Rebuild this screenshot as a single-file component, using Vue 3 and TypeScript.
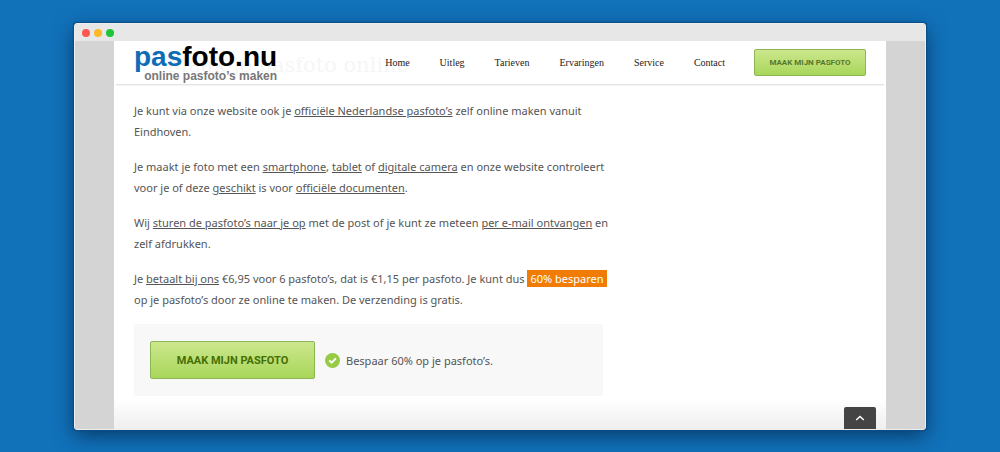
<script setup lang="ts">
interface Part {
  text: string
  kind?: 'link' | 'mark'
}

const nav: string[] = ['Home', 'Uitleg', 'Tarieven', 'Ervaringen', 'Service', 'Contact']

const paragraphs: Part[][][] = [
  [
    [
      { text: 'Je kunt via onze website ook je ' },
      { text: 'officiële Nederlandse pasfoto’s', kind: 'link' },
      { text: ' zelf online maken vanuit' },
    ],
    [{ text: 'Eindhoven.' }],
  ],
  [
    [
      { text: 'Je maakt je foto met een ' },
      { text: 'smartphone', kind: 'link' },
      { text: ', ' },
      { text: 'tablet', kind: 'link' },
      { text: ' of ' },
      { text: 'digitale camera', kind: 'link' },
      { text: ' en onze website controleert' },
    ],
    [
      { text: 'voor je of deze ' },
      { text: 'geschikt', kind: 'link' },
      { text: ' is voor ' },
      { text: 'officiële documenten', kind: 'link' },
      { text: '.' },
    ],
  ],
  [
    [
      { text: 'Wij ' },
      { text: 'sturen de pasfoto’s naar je op', kind: 'link' },
      { text: ' met de post of je kunt ze meteen ' },
      { text: 'per e-mail ontvangen', kind: 'link' },
      { text: ' en' },
    ],
    [{ text: 'zelf afdrukken.' }],
  ],
  [
    [
      { text: 'Je ' },
      { text: 'betaalt bij ons', kind: 'link' },
      { text: ' €6,95 voor 6 pasfoto’s, dat is €1,15 per pasfoto. Je kunt dus ' },
      { text: '60% besparen', kind: 'mark' },
    ],
    [{ text: 'op je pasfoto’s door ze online te maken. De verzending is gratis.' }],
  ],
]
</script>

<template>
  <div class="desktop">
    <div class="window">
      <div class="titlebar">
        <span class="dot red"></span>
        <span class="dot amber"></span>
        <span class="dot green"></span>
      </div>
      <div class="viewport">
        <div class="page">
          <header class="header">
            <h1 class="ghost">Maak je pasfoto online</h1>
            <a class="logo" href="#">
              <span class="name"><span class="blue">pas</span>foto.nu</span>
              <span class="tagline">online pasfoto’s maken</span>
            </a>
            <nav class="nav">
              <a v-for="item in nav" :key="item" href="#">{{ item }}</a>
            </nav>
            <button class="cta small" type="button">MAAK MIJN PASFOTO</button>
          </header>

          <main class="content">
            <p v-for="(lines, i) in paragraphs" :key="i">
              <span v-for="(line, j) in lines" :key="j" class="line">
                <template v-for="(part, k) in line" :key="k">
                  <a v-if="part.kind === 'link'" href="#">{{ part.text }}</a>
                  <mark v-else-if="part.kind === 'mark'">{{ part.text }}</mark>
                  <template v-else>{{ part.text }}</template>
                </template>
              </span>
            </p>
            <div class="offer">
              <button class="cta large" type="button">MAAK MIJN PASFOTO</button>
              <svg class="check" viewBox="0 0 15 15" aria-hidden="true">
                <circle cx="7.5" cy="7.5" r="7.5" fill="#97cb45" />
                <path d="M4.2 7.4 6.6 9.6 10.9 5.4" fill="none" stroke="#fff" stroke-width="1.9" />
              </svg>
              <span>Bespaar 60% op je pasfoto’s.</span>
            </div>
          </main>
          <button class="totop" type="button" aria-label="Naar boven">
            <svg viewBox="0 0 10 6" aria-hidden="true">
              <path d="M1.2 5 5 1.4 8.8 5" fill="none" stroke="#fff" stroke-width="1.4" />
            </svg>
          </button>
        </div>
      </div>
    </div>
  </div>
</template>

<style>
body {
  background: #1172ba;
}
</style>

<style scoped>
.desktop {
  box-sizing: border-box;
  display: flex;
  min-height: 100vh;
  padding: 23px 74px 22px;
  background: #1172ba;
  color: #555;
  font: 11px/21px "Noto Sans", "Open Sans", sans-serif;
}

.window {
  flex: 1;
  display: flex;
  flex-direction: column;
  border: 1px solid #eee;
  border-radius: 3px;
  box-sizing: border-box;
  overflow: hidden;
  background: #d4d4d4;
  box-shadow: 0 0 1px 1px #0b4c88, 0 6px 20px rgba(0, 20, 50, 0.6);
}

.titlebar {
  display: flex;
  align-items: center;
  gap: 4px;
  height: 17px;
  padding-left: 7px;
  background: #e7e7e7;
}

.dot {
  width: 8px;
  height: 8px;
  border-radius: 50%;
}

.red { background: #fb5751; }
.amber { background: #fdb827; }
.green { background: #1fc43a; }

.viewport {
  flex: 1;
  display: flex;
  padding: 0 39px;
}

.page {
  position: relative;
  flex: 1;
  background: linear-gradient(#fff calc(100% - 30px), #efefef);
}

.header {
  position: relative;
  display: flex;
  align-items: center;
  height: 43px;
  margin: 0 2px;
  padding: 0 18px;
  border-bottom: 1px solid #e3e3e3;
  box-shadow: 0 1px 1px #f5f5f5;
}

.ghost {
  position: absolute;
  left: 51px;
  top: 9px;
  margin: 0;
  color: #f6f6f6;
  font: 21px/30px "DejaVu Serif", serif;
  white-space: nowrap;
}

.logo {
  position: relative;
  display: flex;
  flex-direction: column;
  align-items: flex-end;
  text-decoration: none;
  font-family: "Liberation Sans", Arial, sans-serif;
  font-weight: bold;
}

.name {
  color: #000;
  font-size: 28px;
  line-height: 26px;
}

.blue { color: #0c6cb6; }

.tagline {
  color: #777;
  font-size: 12px;
  line-height: 12px;
}

.nav {
  position: relative;
  display: flex;
  gap: 30px;
  margin-left: auto;
}

.nav a {
  color: #222;
  font: 10px/16px "Liberation Serif", serif;
  text-decoration: none;
}

.cta {
  border: 1px solid #8cb553;
  border-radius: 2px;
  background: linear-gradient(#cce78d, #a8d65a);
  color: #456f03;
  font-family: Roboto, "Noto Sans", sans-serif;
  font-weight: bold;
  white-space: nowrap;
}

.small {
  height: 27px;
  width: 112px;
  margin-left: 29px;
  padding: 0;
  color: #56782c;
  font-size: 8px;
}

.content {
  width: 469px;
  padding: 15px 0 33px 20px;
}

.content p {
  margin: 0 0 14px;
}

.line {
  display: block;
  white-space: nowrap;
}

.content a {
  color: inherit;
  text-underline-offset: 1px;
}

mark {
  padding: 1px 3px;
  background: #f07c05;
  color: #fff;
}

.offer {
  display: flex;
  align-items: center;
  padding: 17px 16px;
  background: #f8f8f8;
}

.large {
  width: 165px;
  height: 38px;
  padding: 0;
  font-size: 11px;
}

.check {
  width: 15px;
  height: 15px;
  margin: 0 6px 0 10px;
}

.totop {
  position: absolute;
  right: 10px;
  bottom: 0;
  display: flex;
  align-items: center;
  justify-content: center;
  width: 32px;
  height: 22px;
  padding: 0;
  border: 0;
  border-radius: 2px 2px 0 0;
  background: #444;
}

.totop svg {
  width: 10px;
  height: 6px;
}
</style>
